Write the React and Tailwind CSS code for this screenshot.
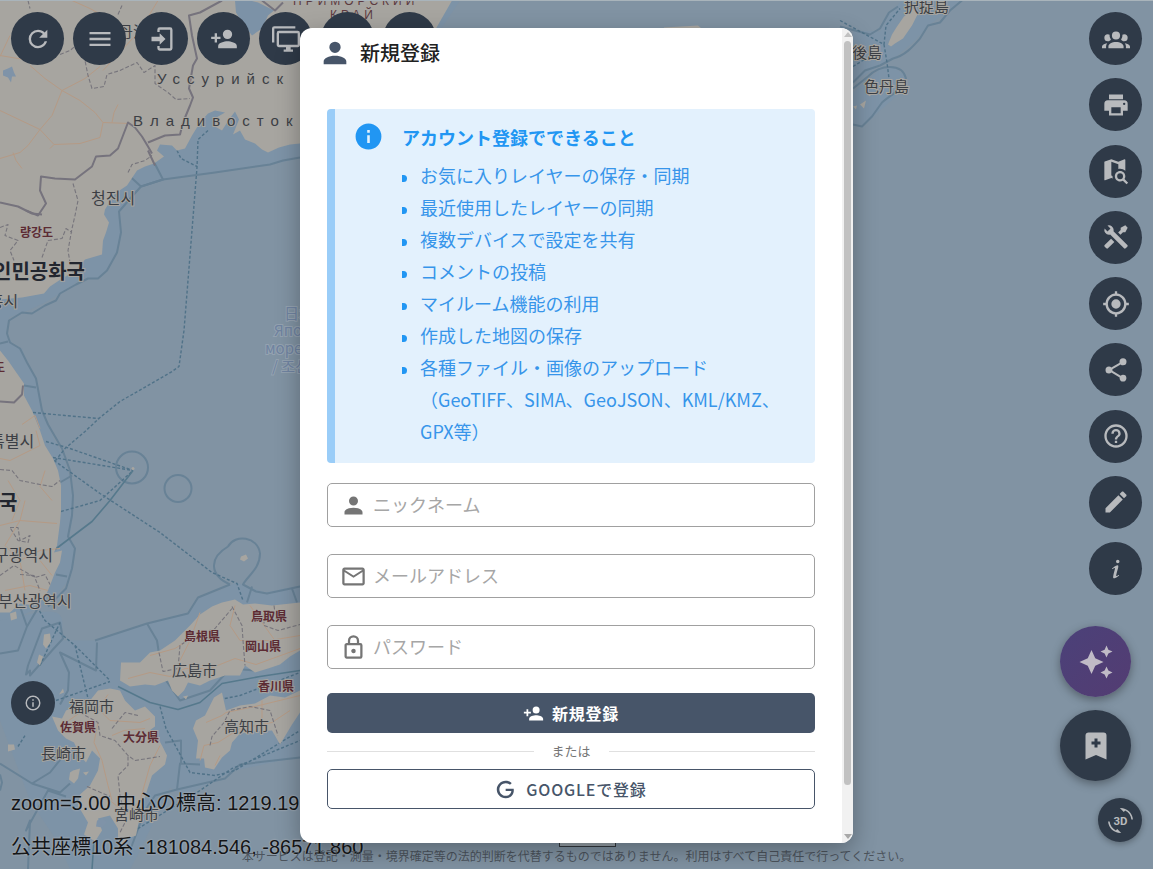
const icons = {
  refresh:
    'M17.65,6.35C16.2,4.9 14.21,4 12,4A8,8 0 0,0 4,12A8,8 0 0,0 12,20C15.73,20 18.84,17.45 19.73,14H17.65C16.83,16.33 14.61,18 12,18A6,6 0 0,1 6,12A6,6 0 0,1 12,6C13.66,6 15.14,6.69 16.22,7.78L13,11H20V4L17.65,6.35Z',
  menu: 'M3,6H21V8H3V6M3,11H21V13H3V11M3,16H21V18H3V16Z',
  login:
    'M10,17V14H3V10H10V7L15,12L10,17M10,2H19A2,2 0 0,1 21,4V20A2,2 0 0,1 19,22H10A2,2 0 0,1 8,20V18H10V20H19V4H10V6H8V4A2,2 0 0,1 10,2Z',
  accountPlus:
    'M15,14C12.33,14 7,15.33 7,18V20H23V18C23,15.33 17.67,14 15,14M6,10V7H4V10H1V12H4V15H6V12H9V10M15,12A4,4 0 0,0 19,8A4,4 0 0,0 15,4A4,4 0 0,0 11,8A4,4 0 0,0 15,12Z',
  monitors:
    'M22,17V7H6V17H22M22,5A2,2 0 0,1 24,7V17C24,18.11 23.1,19 22,19H16V21H18V23H10V21H12V19H6C4.89,19 4,18.11 4,17V7A2,2 0 0,1 6,5H22M2,3V15H0V3A2,2 0 0,1 2,1H20V3H2Z',
  group:
    'M12,5.5A3.5,3.5 0 0,1 15.5,9A3.5,3.5 0 0,1 12,12.5A3.5,3.5 0 0,1 8.5,9A3.5,3.5 0 0,1 12,5.5M5,8C5.56,8 6.08,8.15 6.53,8.42C6.38,9.85 6.8,11.27 7.66,12.38C7.16,13.34 6.16,14 5,14A3,3 0 0,1 2,11A3,3 0 0,1 5,8M19,8A3,3 0 0,1 22,11A3,3 0 0,1 19,14C17.84,14 16.84,13.34 16.34,12.38C17.2,11.27 17.62,9.85 17.47,8.42C17.92,8.15 18.44,8 19,8M5.5,18.25C5.5,16.18 8.41,14.5 12,14.5C15.59,14.5 18.5,16.18 18.5,18.25V20H5.5V18.25M0,20V18.5C0,17.11 1.89,15.94 4.45,15.6C3.86,16.28 3.5,17.22 3.5,18.25V20H0M24,20H20.5V18.25C20.5,17.22 20.14,16.28 19.55,15.6C22.11,15.94 24,17.11 24,18.5V20Z',
  printer:
    'M18,3H6V7H18M19,12A1,1 0 0,1 18,11A1,1 0 0,1 19,10A1,1 0 0,1 20,11A1,1 0 0,1 19,12M16,19H8V14H16M19,8H5A3,3 0 0,0 2,11V17H6V21H18V17H22V11A3,3 0 0,0 19,8Z',
  mapSearch:
    'M15.5,12C18,12 20,14 20,16.5C20,17.38 19.75,18.21 19.31,18.9L22.39,22L21,23.39L17.88,20.32C17.19,20.75 16.37,21 15.5,21C13,21 11,19 11,16.5C11,14 13,12 15.5,12M15.5,14A2.5,2.5 0 0,0 13,16.5A2.5,2.5 0 0,0 15.5,19A2.5,2.5 0 0,0 18,16.5A2.5,2.5 0 0,0 15.5,14M19.5,2A0.5,0.5 0 0,1 20,2.5V11.81C18.83,10.69 17.25,10 15.5,10C14.97,10 14.47,10.06 14,10.18V6.11L8,4V15.89L9.03,16.25L9,16.5C9,17.14 9.09,17.76 9.26,18.34L8,17.9L2.66,19.97L2.5,20A0.5,0.5 0 0,1 2,19.5V4.38C2,4.15 2.15,3.97 2.36,3.9L8,2L14,4.1L19.34,2Z',
  tools:
    'M21.71 20.29L20.29 21.71A1 1 0 0 1 18.88 21.71L7 9.85A3.81 3.81 0 0 1 6 10A4 4 0 0 1 2.22 4.7L4.76 7.24L5.29 6.71L6.71 5.29L7.24 4.76L4.7 2.22A4 4 0 0 1 10 6A3.81 3.81 0 0 1 9.85 7L21.71 18.88A1 1 0 0 1 21.71 20.29M2.29 18.88A1 1 0 0 0 2.29 20.29L3.71 21.71A1 1 0 0 0 5.12 21.71L10.59 16.25L7.76 13.42M20 2L16 4V6L13.83 8.17L15.83 10.17L18 8H20L22 4Z',
  gps:
    'M12,8A4,4 0 0,1 16,12A4,4 0 0,1 12,16A4,4 0 0,1 8,12A4,4 0 0,1 12,8M3.05,13H1V11H3.05C3.5,6.83 6.83,3.5 11,3.05V1H13V3.05C17.17,3.5 20.5,6.83 20.95,11H23V13H20.95C20.5,17.17 17.17,20.5 13,20.95V23H11V20.95C6.83,20.5 3.5,17.17 3.05,13M12,5A7,7 0 0,0 5,12A7,7 0 0,0 12,19A7,7 0 0,0 19,12A7,7 0 0,0 12,5Z',
  share:
    'M18,16.08C17.24,16.08 16.56,16.38 16.04,16.85L8.91,12.7C8.96,12.47 9,12.24 9,12C9,11.76 8.96,11.53 8.91,11.3L15.96,7.19C16.5,7.69 17.21,8 18,8A3,3 0 0,0 21,5A3,3 0 0,0 18,2A3,3 0 0,0 15,5C15,5.24 15.04,5.47 15.09,5.7L8.04,9.81C7.5,9.31 6.79,9 6,9A3,3 0 0,0 3,12A3,3 0 0,0 6,15C6.79,15 7.5,14.69 8.04,14.19L15.16,18.34C15.11,18.55 15.08,18.77 15.08,19C15.08,20.61 16.39,21.91 18,21.91C19.61,21.91 20.92,20.61 20.92,19A2.92,2.92 0 0,0 18,16.08Z',
  help:
    'M11,18H13V16H11V18M12,2A10,10 0 0,0 2,12A10,10 0 0,0 12,22A10,10 0 0,0 22,12A10,10 0 0,0 12,2M12,20C7.59,20 4,16.41 4,12C4,7.59 7.59,4 12,4C16.41,4 20,7.59 20,12C20,16.41 16.41,20 12,20M12,6A4,4 0 0,0 8,10H10A2,2 0 0,1 12,8A2,2 0 0,1 14,10C14,12 11,11.75 11,15H13C13,12.75 16,12.5 16,10A4,4 0 0,0 12,6Z',
  pencil:
    'M20.71,7.04C21.1,6.65 21.1,6 20.71,5.63L18.37,3.29C18,2.9 17.35,2.9 16.96,3.29L15.12,5.12L18.87,8.87M3,17.25V21H6.75L17.81,9.93L14.06,6.18L3,17.25Z',
  infoItalic:
    'M13.5,4A1.5,1.5 0 0,0 12,5.5A1.5,1.5 0 0,0 13.5,7A1.5,1.5 0 0,0 15,5.5A1.5,1.5 0 0,0 13.5,4M13.14,8.77C11.95,8.87 8.7,11.46 8.7,11.46C8.5,11.61 8.56,11.6 8.72,11.88C8.88,12.15 8.86,12.17 9.05,12.04C9.25,11.91 9.58,11.7 10.13,11.36C12.25,10 10.47,13.14 9.56,18.43C9.2,21.05 11.56,19.7 12.17,19.3C12.77,18.91 14.38,17.8 14.54,17.69C14.76,17.54 14.6,17.42 14.43,17.17C14.31,17 14.19,17.12 14.19,17.12C13.54,17.55 12.35,18.45 12.19,17.88C12,17.31 13.22,13.4 13.89,10.71C14,10.07 14.3,8.67 13.14,8.77Z',
  sparkles:
    'M19,1L17.74,3.75L15,5L17.74,6.26L19,9L20.25,6.26L23,5L20.25,3.75M9,4L6.5,9.5L1,12L6.5,14.5L9,20L11.5,14.5L17,12L11.5,9.5M19,15L17.74,17.74L15,19L17.74,20.25L19,23L20.25,20.25L23,19L20.25,17.74',
  bookmarkPlus: 'M17,3A2,2 0 0,1 19,5V21L12,18L5,21V5C5,3.89 5.9,3 7,3H17M11,7V9H9V11H11V13H13V11H15V9H13V7H11Z',
  infoOutline:
    'M11,9H13V7H11M12,20C7.59,20 4,16.41 4,12C4,7.59 7.59,4 12,4C16.41,4 20,7.59 20,12C20,16.41 16.41,20 12,20M12,2A10,10 0 0,0 2,12A10,10 0 0,0 12,22A10,10 0 0,0 22,12A10,10 0 0,0 12,2M11,17H13V11H11V17Z',
  info: 'M13,9H11V7H13M13,17H11V11H13M12,2A10,10 0 0,0 2,12A10,10 0 0,0 12,22A10,10 0 0,0 22,12A10,10 0 0,0 12,2Z',
  account:
    'M12,4A4,4 0 0,1 16,8A4,4 0 0,1 12,12A4,4 0 0,1 8,8A4,4 0 0,1 12,4M12,14C16.42,14 20,15.79 20,18V20H4V18C4,15.79 7.58,14 12,14Z',
  email:
    'M22 6C22 4.9 21.1 4 20 4H4C2.9 4 2 4.9 2 6V18C2 19.1 2.9 20 4 20H20C21.1 20 22 19.1 22 18V6M20 6L12 11L4 6H20M20 18H4V8L12 13L20 8V18Z',
  lock:
    'M12,17C10.89,17 10,16.1 10,15C10,13.89 10.89,13 12,13A2,2 0 0,1 14,15A2,2 0 0,1 12,17M18,20V10H6V20H18M18,8A2,2 0 0,1 20,10V20A2,2 0 0,1 18,22H6C4.89,22 4,21.1 4,20V10C4,8.89 4.89,8 6,8H7V6A5,5 0 0,1 12,1A5,5 0 0,1 17,6V8H18M12,3A3,3 0 0,0 9,6V8H15V6A3,3 0 0,0 12,3Z',
  google:
    'M21.35,11.1H12.18V13.83H18.69C18.36,17.64 15.19,19.27 12.19,19.27C8.36,19.27 5,16.25 5,12C5,7.9 8.2,4.73 12.2,4.73C15.29,4.73 17.1,6.7 17.1,6.7L19,4.72C19,4.72 16.56,2 12.1,2C6.42,2 2.03,6.8 2.03,12C2.03,17.05 6.16,22 12.25,22C17.6,22 21.5,18.33 21.5,12.91C21.5,11.76 21.35,11.1 21.35,11.1Z',
}

const topTools = [
  { icon: 'refresh', label: '再読み込み' },
  { icon: 'menu', label: 'メニュー' },
  { icon: 'login', label: 'ログイン' },
  { icon: 'accountPlus', label: '新規登録' },
  { icon: 'monitors', label: '画面分割' },
  { icon: 'menu', label: 'レイヤー' },
  { icon: 'account', label: 'マイルーム' },
]

const sideTools = [
  { icon: 'group', label: 'グループ' },
  { icon: 'printer', label: '印刷' },
  { icon: 'mapSearch', label: '地図検索' },
  { icon: 'tools', label: 'ツール' },
  { icon: 'gps', label: '現在地' },
  { icon: 'share', label: '共有' },
  { icon: 'help', label: 'ヘルプ' },
  { icon: 'pencil', label: '描画' },
  { icon: 'infoItalic', label: '情報' },
]

const features = [
  'お気に入りレイヤーの保存・同期',
  '最近使用したレイヤーの同期',
  '複数デバイスで設定を共有',
  'コメントの投稿',
  'マイルーム機能の利用',
  '作成した地図の保存',
  '各種ファイル・画像のアップロード（GeoTIFF、SIMA、GeoJSON、KML/KMZ、GPX等）',
]

const fields = [
  { id: 'nickname', type: 'text', icon: 'account', label: 'ニックネーム' },
  { id: 'email', type: 'email', icon: 'email', label: 'メールアドレス' },
  { id: 'password', type: 'password', icon: 'lock', label: 'パスワード' },
]

const land = [
  'M0,0L452,0L436,28L360,138L300,143L290,144L279,147L268,152L262,149L255,143L245,139L240,130L233,134L239,119L235,111L229,119L222,130L215,126L213,119L225,112L215,110L208,113L200,122L192,135L185,148L177,150L172,145L160,144L157,150L164,156L154,163L145,166L137,170L127,185L115,193L105,209L104,214L109,222L106,232L103,240L102,254L85,259L76,270L62,278L50,286L44,293L22,297L0,299Z',
  'M0,350L8,360L17,373L24,383L24,395L32,410L40,430L45,445L53,458L58,470L61,485L61,510L60,522L57,545L54,552L62,550L60,562L55,572L50,585L45,597L35,605L20,603L10,612L0,612Z',
  'M120,680L121,662L140,662L150,652L160,650L175,640L190,625L200,614L212,606L222,602L235,599L243,604L255,603L272,605L300,602L360,596L360,650L300,650L290,656L280,664L268,668L255,672L245,665L240,675L225,675L210,680L200,685L188,682L184,690L178,696L172,690L168,680L155,685L145,684L130,686Z',
  'M110,688L120,690L125,700L135,710L145,706L155,716L155,726L148,731L158,738L162,745L167,755L165,764L152,775L147,790L140,815L136,835L128,838L122,847L118,838L118,828L110,815L98,818L102,830L95,841L84,834L88,822L78,805L80,794L90,785L98,770L100,758L92,750L86,762L80,755L74,742L66,738L58,730L52,716L62,718L66,710L75,706L90,700L98,690Z',
  'M210,705L214,697L222,692L226,710L240,705L255,703L270,695L285,697L300,690L350,690L350,708L300,712L292,724L280,744L272,730L255,731L240,733L232,742L230,750L222,757L214,769L205,767L204,758L196,758L198,740L193,728L196,720L205,715Z',
  'M888,44L892,34L897,26L904,16L914,8L918,13L912,25L903,38L895,43L891,46Z',
  'M664,27L664,30L704,30L698,25Z',
  'M73,770L80,768L78,778L74,783L69,779L70,772Z',
  'M44,634L50,633L51,641L46,648L43,644ZM39,654L43,656L40,665L37,662Z',
  'M8,744L14,744L15,749L8,751Z',
  'M10,613L16,611L17,618L11,620Z',
  'M241,556L246,554L248,558L244,561L240,559ZM59,694L63,688L64,692ZM83,772L89,771L86,775ZM183,696L188,695L186,699Z',
  'M860,104L866,100L864,108ZM866,93L872,92L870,96ZM853,106L857,105L856,109Z',
]

const coastalWaters = [
  'M300,157L285,161L270,164L215,172L163,179L141,186L130,198L118,212L121,232L117,252L107,270L98,278L84,277L60,293L45,302L28,310L9,317L7,333L13,345L22,348L27,362L36,380L42,410L53,437L63,455L69,475L72,495L73,515L69,538L75,552L72,570L66,583L50,602L0,625L0,0L460,0L360,150Z',
  'M60,640C70,600 50,610 0,620L0,720L30,800L60,845L70,869L130,869L140,850L170,787L185,795L235,770L300,756L380,760L380,580L300,585L265,592L236,582L220,590L200,596L188,612L147,623L95,640Z',
  'M853,82L880,65L895,57L913,42L930,24L961,0L902,0L889,14L880,31L853,30ZM853,125L865,124L880,110L895,97L906,85L905,75L893,66L880,69L870,77L853,92Z',
]

const boundaries = [
  'M163,179L215,172L270,164L283,160L300,157',
  'M141,186L163,179L148,150M141,186L129,175',
  'M163,179L141,186L132,196L119,211L121,232L117,252L107,270L98,278L88,278L76,284L60,293L56,300L45,305L32,313L22,312L9,320L7,333L10,342L20,348L27,362L36,378L42,410L48,424L62,448L70,470L73,495L72,515L68,536L75,548L72,568L66,588L48,606',
  'M0,343L8,341M24,385L36,387M60,482L72,475M56,574L67,576M20,606L27,626L18,650L0,653M27,626L40,604',
  'M30,670L26,674L28,665L42,628L60,622L63,638L52,650L30,675Z',
  'M95,640L147,623L188,613L198,597L230,584',
  'M230,584C210,575 208,558 228,546C235,533 258,536 260,553C260,568 248,575 243,584L256,591L267,593L300,586',
  'M147,623L157,640L160,660L166,680L180,700L210,690L230,668L255,670M97,642L96,670L60,652L69,672L68,690L60,704',
  'M0,763L32,783L60,792L70,783M32,783L50,772L66,752M0,774L2,782L0,790M28,869L30,820L26,830L48,790L66,796',
  'M300,757L240,764L225,778L177,789L155,795L145,810L130,850M177,789L180,763L200,764M252,586L247,602M292,588L297,602M181,763L181,740L165,742',
  'M840,26L870,34L880,28L889,12L898,6M893,58L880,65L865,70L853,82M893,58C905,55 912,47 920,38L928,25L940,22L950,10L962,0',
  'M853,88L868,76C880,64 902,62 906,78C906,88 893,92 882,102L872,116L862,126L853,124',
]

const ferryLines = [
  'M208,130L198,139L197,167L190,255L184,330L179,366L172,371L120,401L100,417L85,431L65,448L54,462',
  'M177,150L181,158L197,166',
  'M33,412L65,415L99,418',
  'M46,441L70,448L133,470M53,457L133,470M54,460L100,493L160,532L212,572L237,583L243,600M61,511L100,500L133,470',
  'M37,606L45,620L75,645L110,680M56,700L110,681M75,645L90,706M18,746L25,735M40,665L60,622',
  'M160,706L166,728L190,772L215,775L235,770L300,730M125,836L200,790L232,768L300,740M215,700L240,695L300,672',
  'M840,20L884,44L886,25L900,8M884,44L887,62L889,78M853,66L866,58',
]

const borders = [
  'M0,202L18,206L26,210L38,215L46,203L40,190L41,176L55,178L75,179L92,166L96,156L110,155L118,148L128,122L135,127L142,136L148,146L152,153',
  'M148,142L165,135L180,134L183,122L190,105L193,97L189,88L193,65L197,58L192,35L189,15L200,12L222,0',
  'M262,0L275,10L283,2M148,150L155,165',
  'M0,401L14,402L22,394L23,385M26,210L32,213L42,214',
]

const provinces = [
  'M84,55L88,75L92,88L104,86L107,74L120,70L137,62L144,72L155,65L155,83L168,92L176,99L190,98',
  'M73,183L78,200L75,215L72,228L68,250L70,262M0,227L8,224L5,235L18,240L10,250L14,260M42,257L48,240L62,238L66,228L72,232',
  'M128,172L132,164L145,160L152,155M28,0L30,8',
  'M0,469L12,470L20,480L30,482L40,484L52,486L60,480M10,527L18,527L20,540L30,535L28,542L18,540ZM0,575L14,565L35,577L45,574L50,584M20,574L34,575L40,590',
  'M159,652L163,671L178,668L180,645L193,636L215,628L232,608M232,606L242,625L243,640L245,665M264,613L264,625L278,630L300,624M274,605L276,620',
  'M80,712L98,722L100,735L115,740L128,755L135,760L160,756M112,728L125,712L138,715M128,756L128,765L118,775L120,795L126,820L120,832M87,786L110,796',
  'M210,745L212,736L224,722L230,710L250,706L270,710L278,735',
  'M60,54L70,50L76,45M118,14L122,5',
]

const roads = [
  'M30,65L45,78L62,90L80,100L95,112L103,122L130,123M62,90L52,115L40,129L28,145L20,152L0,158M62,90L85,78L100,66M40,129L0,110',
  'M40,129L54,144L80,143L100,137L103,122M112,122L114,112L118,104M72,0L90,8L108,18M0,55L30,60M13,152L16,160L22,168',
  'M103,70L140,30L158,0M54,144L50,148M0,56L10,35',
  'M36,430L40,445L10,460L0,458M0,525L20,520L57,523M45,470L40,486L52,500M25,500L20,520L5,545L20,560L40,550L60,548M20,560L25,590M40,560L52,575',
  'M8,480L20,500L12,520M5,590L30,585L48,590M22,424L35,415L40,428',
  'M128,678L150,672L170,676L185,668L210,668L235,658L256,664L300,648M150,655L175,648L195,635M200,612L190,640L180,660M235,605L230,625L240,640L270,640L300,635M250,605L262,622L275,640',
  'M108,694L98,708L80,712L66,722M98,708L110,720L140,722L150,718M98,722L94,742L102,760L108,785L112,800M160,745L150,765L140,800L126,815M90,795L110,800L120,808M112,735L124,730L145,728',
  'M200,760L204,745L218,742L240,728L272,722L290,710M206,722L222,715L226,712L255,706L300,695M215,765L220,755M262,700L262,720',
]

const cities = [
  { x: 91, y: 203, text: '청진시' },
  { x: -26, y: 306, text: '함흥시' },
  { x: -10, y: 446, text: '특별시' },
  { x: -6, y: 560, text: '구광역시' },
  { x: -2, y: 606, text: '부산광역시' },
  { x: 172, y: 675, text: '広島市' },
  { x: 69, y: 711, text: '福岡市' },
  { x: 224, y: 731, text: '高知市' },
  { x: 41, y: 758, text: '長崎市' },
  { x: 114, y: 819, text: '宮崎市' },
  { x: 837, y: 57, text: '国後島' },
  { x: 864, y: 91, text: '色丹島' },
  { x: 904, y: 11, text: '択捉島' },
]

const prefectures = [
  { x: 20, y: 236, text: '량강도' },
  { x: -6, y: 371, text: '도' },
  { x: 251, y: 620, text: '鳥取県' },
  { x: 184, y: 640, text: '島根県' },
  { x: 245, y: 650, text: '岡山県' },
  { x: 258, y: 690, text: '香川県' },
  { x: 60, y: 731, text: '佐賀県' },
  { x: 123, y: 741, text: '大分県' },
]

function Icon({ name, className }) {
  return (
    <svg viewBox="0 0 24 24" fill="currentColor" aria-hidden="true" className={`shrink-0 ${className}`}>
      <path d={icons[name]} />
    </svg>
  )
}

function Lines({ paths, ...rest }) {
  return (
    <g fill="none" strokeLinejoin="round" {...rest}>
      {paths.map((d) => (
        <path key={d} d={d} />
      ))}
    </g>
  )
}

function MapCanvas() {
  return (
    <svg
      viewBox="0 0 1153 869"
      preserveAspectRatio="xMidYMid slice"
      className="absolute inset-0 h-full w-full font-['Noto_Sans_CJK_JP','Noto_Sans_CJK_KR',sans-serif]"
      aria-label="地図"
    >
      <rect width="1153" height="869" fill="#8193a3" />
      <g fill="#7d93a7">
        {coastalWaters.map((d) => (
          <path key={d} d={d} />
        ))}
      </g>
      <Lines paths={boundaries} stroke="#688296" strokeWidth="2" />
      <g stroke="#688296" strokeWidth="2" fill="none">
        <circle cx="132" cy="467" r="16" />
        <circle cx="178" cy="488" r="13.5" />
      </g>
      <Lines paths={ferryLines} stroke="#507288" strokeWidth="1.4" strokeDasharray="3 2" />
      <Lines
        paths={['M133,470L110,500L92,521L55,549', 'M118,686L150,702L178,709L200,702L222,683L260,676L300,670M92,869L95,825']}
        stroke="#56798c"
        strokeWidth="1.6"
      />
      <g fill="#a7a5a0">
        {land.map((d) => (
          <path key={d} d={d} />
        ))}
        <circle cx="133" cy="468" r="1.5" />
      </g>
      <path d="M235,0L236,12L242,22L252,35L262,28L268,15L274,10L258,2L250,0Z" fill="#7c92a7" />
      <path d="M3,70L8,68L12,66L14,72L16,76L12,76L11,82L8,77L3,75ZM97,820L103,818L107,822L102,827L96,826Z" fill="#7f93a8" />
      <Lines paths={roads} stroke="#b59a85" strokeWidth="1" />
      <Lines paths={provinces} stroke="#77757c" strokeWidth="1.1" strokeDasharray="4 2" />
      <Lines paths={borders} stroke="#76737d" strokeWidth="2" />

      <g fill="#3c3f45" stroke="#a7a5a0" strokeWidth="2" paintOrder="stroke" fontSize="15">
        {cities.map((c) => (
          <text key={c.text} x={c.x} y={c.y} fontSize={/[가-힣]/.test(c.text) ? 16 : 15}>
            {c.text}
          </text>
        ))}
        <text x="118" y="36">
          丹江
        </text>
      </g>
      <g fill="#5c2b33" stroke="#a7a5a0" strokeWidth="2" paintOrder="stroke" fontSize="12" fontWeight="700">
        {prefectures.map((p) => (
          <text key={p.text} x={p.x} y={p.y}>
            {p.text}
          </text>
        ))}
      </g>
      <g
        fill="#3c3f45"
        stroke="#a7a5a0"
        strokeWidth="2"
        paintOrder="stroke"
        fontSize="15"
        className="font-['Liberation_Sans',sans-serif] tracking-[7px]"
      >
        <text x="157" y="83">
          Уссурийск
        </text>
        <text x="133" y="125">
          Владивосток
        </text>
      </g>
      <g fill="#5c3a40" fontSize="12" className="font-['Liberation_Sans',sans-serif] tracking-[4px]">
        <text x="293" y="4">
          ПРИМОРСКИЙ
        </text>
        <text x="330" y="18">
          КРАЙ
        </text>
      </g>
      <g fill="#22262f" stroke="#a7a5a0" strokeWidth="2" paintOrder="stroke" fontSize="20" fontWeight="700">
        <text x="-7" y="278">
          인민공화국
        </text>
        <text x="-1" y="509">
          국
        </text>
      </g>
      <g fill="#6f83a0" stroke="#94a2b0" strokeWidth="2" paintOrder="stroke" fontSize="15">
        <text x="284" y="318">
          日本海
        </text>
        <text x="274" y="335">
          Японское
        </text>
        <text x="265" y="353">
          море
        </text>
        <text x="272" y="371">
          / 조선
        </text>
      </g>
    </svg>
  )
}

function RoundButton({ icon, label }) {
  return (
    <button
      type="button"
      aria-label={label}
      className="flex size-[53px] shrink-0 items-center justify-center rounded-full bg-[#2f3a48] text-[#b8babd]"
    >
      <Icon name={icon} className="size-7" />
    </button>
  )
}

function RegisterDialog() {
  return (
    <div
      role="dialog"
      aria-labelledby="dialog-title"
      className="flex max-h-[815px] min-h-0 w-full max-w-[553px] overflow-hidden rounded-xl bg-white shadow-[0_8px_24px_rgba(0,0,0,0.3)]"
    >
      <div className="min-w-0 flex-1 overflow-hidden pb-[34px]">
        <header className="flex items-center gap-2 px-[18px] pt-2 text-[#212121]">
          <Icon name="account" className="size-[34px] text-[#475569]" />
          <h1 id="dialog-title" className="text-xl font-medium">
            新規登録
          </h1>
        </header>

        <div className="px-[27px] pt-[39px]">
          <section className="flex gap-[18px] rounded-[4px] border-l-8 border-[#9acdf8] bg-[#e3f1fd] pr-4 pb-4 pl-[18px] text-lg/8 text-[#2196f3]">
            <Icon name="info" className="mt-3 size-[31px]" />
            <div className="min-w-0 flex-1 pt-3">
              <h2 className="font-bold">アカウント登録でできること</h2>
              <ul className="mt-[6px] text-[#3795ea]">
                {features.map((f) => (
                  <li
                    key={f}
                    className="relative pl-[18px] before:absolute before:top-4 before:left-0 before:h-[7px] before:w-[5px] before:rounded-r-full before:bg-[#2196f3]"
                  >
                    {f}
                  </li>
                ))}
              </ul>
            </div>
          </section>

          <form className="mt-5">
            <div className="flex flex-col gap-[27px]">
              {fields.map((f) => (
                <label
                  key={f.id}
                  htmlFor={f.id}
                  className="flex h-11 items-center gap-[6px] rounded-[5px] border border-[#a0a0a0] px-3 text-[#757575]"
                >
                  <Icon name={f.icon} className="size-[27px]" />
                  <span className="sr-only">{f.label}</span>
                  <input
                    id={f.id}
                    type={f.type}
                    placeholder={f.label}
                    className="min-w-0 flex-1 bg-transparent pb-0.5 text-lg text-[#212121] outline-none placeholder:text-[#a6a6a6]"
                  />
                </label>
              ))}
            </div>

            <button
              type="submit"
              className="mt-6 flex h-10 w-full items-center justify-center gap-2 rounded-[5px] bg-[#475569] text-base font-bold tracking-wider text-white"
            >
              <Icon name="accountPlus" className="size-[21px]" />
              新規登録
            </button>
            <div className="flex h-9 items-center gap-[18px] text-[13px] text-[#757575]">
              <span className="h-px flex-1 bg-[#e0e0e0]" />
              または
              <span className="h-px flex-1 bg-[#e0e0e0]" />
            </div>
            <button
              type="button"
              className="flex h-10 w-full items-center justify-center gap-[10px] rounded-[5px] border border-[#475569] text-base font-medium tracking-wider text-[#475569]"
            >
              <Icon name="google" className="size-[21px]" />
              GOOGLEで登録
            </button>
          </form>
        </div>
      </div>

      {/* scrollbar */}
      <div className="flex w-[11px] shrink-0 flex-col items-center bg-[#f1f1f1] py-1" aria-hidden="true">
        <svg viewBox="0 0 8 5" className="h-[5px] w-2 fill-[#c1c1c1]">
          <path d="M4 0L8 5H0Z" />
        </svg>
        <div className="mt-1 w-[7px] flex-1 rounded-full bg-[#c1c1c1]" />
        <svg viewBox="0 0 8 5" className="mt-[49px] h-[5px] w-2 fill-[#a8a8a8]">
          <path d="M0 0H8L4 5Z" />
        </svg>
      </div>
    </div>
  )
}

export default function App() {
  return (
    <div className="relative h-screen overflow-hidden border-t border-[#a9b4bb] font-['Noto_Sans_CJK_JP',sans-serif]">
      <MapCanvas />

      {/* map controls */}
      <nav className="absolute top-[11px] left-[11px] flex gap-[9px]">
        {topTools.map((t) => (
          <RoundButton key={t.label} {...t} />
        ))}
      </nav>

      <nav className="absolute top-[11px] right-[11px] flex h-[583px] flex-col justify-between">
        {sideTools.map((t) => (
          <RoundButton key={t.label} {...t} />
        ))}
      </nav>

      <div className="absolute right-[22px] bottom-[88px] flex flex-col gap-[13px]">
        <button
          type="button"
          aria-label="AIアシスタント"
          className="flex size-[71px] items-center justify-center rounded-full bg-linear-to-br from-[#4b4179] to-[#533c72] text-[#c0bbc6] shadow-[0_3px_10px_rgba(0,0,0,0.35)]"
        >
          <Icon name="sparkles" className="size-9" />
        </button>
        <button
          type="button"
          aria-label="ブックマーク追加"
          className="flex size-[71px] items-center justify-center rounded-full bg-[#2f3a48] text-[#b8babd] shadow-[0_3px_10px_rgba(0,0,0,0.35)]"
        >
          <Icon name="bookmarkPlus" className="size-9" />
        </button>
      </div>

      <button
        type="button"
        aria-label="3D表示"
        className="absolute right-[11px] bottom-[27px] flex size-11 items-center justify-center rounded-full bg-[#2f3a48] text-[#b8babd] shadow-[0_2px_6px_rgba(0,0,0,0.3)]"
      >
        <svg viewBox="0 0 24 24" className="size-[25px]" fill="currentColor" aria-hidden="true">
          <path d="M7.52 21.48C4.25 19.94 1.91 16.76 1.55 13H.05C.56 19.16 5.71 24 12 24l.66-.03-3.81-3.81-1.33 1.32z" />
          <path d="M12 0l-.66.03 3.81 3.81 1.33-1.33c3.27 1.55 5.61 4.72 5.96 8.48h1.5C23.44 4.84 18.29 0 12 0z" />
          <text x="12" y="16" textAnchor="middle" fontSize="11" fontWeight="700" fontFamily="Roboto, sans-serif">
            3D
          </text>
        </svg>
      </button>

      <button
        type="button"
        aria-label="地図情報"
        className="absolute bottom-36 left-[11px] flex size-11 items-center justify-center rounded-full bg-[#2f3a48] text-[#b8babd]"
      >
        <Icon name="infoOutline" className="size-[18px]" />
      </button>

      <div className="absolute bottom-2 left-[11px] flex flex-col gap-4 font-['Liberation_Sans','Noto_Sans_CJK_JP',sans-serif] text-xl/7 whitespace-nowrap text-[#141618] [text-shadow:0_0_2px_#a8b0b8,0_0_2px_#a8b0b8]">
        <p>zoom=5.00 中心の標高: 1219.19m</p>
        <p>公共座標10系 -181084.546, -86571.860</p>
      </div>

      <div className="absolute bottom-[22px] left-[559px] h-3 w-[57px] border border-t-0 border-[#33383e] bg-[#99a3ab]" />

      <p className="absolute inset-x-0 bottom-[5px] text-center text-xs/4 text-[#4c545d]">
        本サービスは登記・測量・境界確定等の法的判断を代替するものではありません。利用はすべて自己責任で行ってください。
      </p>

      <div className="absolute inset-0 flex items-start justify-center px-6 pt-[27px] pb-[26px]">
        <RegisterDialog />
      </div>
    </div>
  )
}
